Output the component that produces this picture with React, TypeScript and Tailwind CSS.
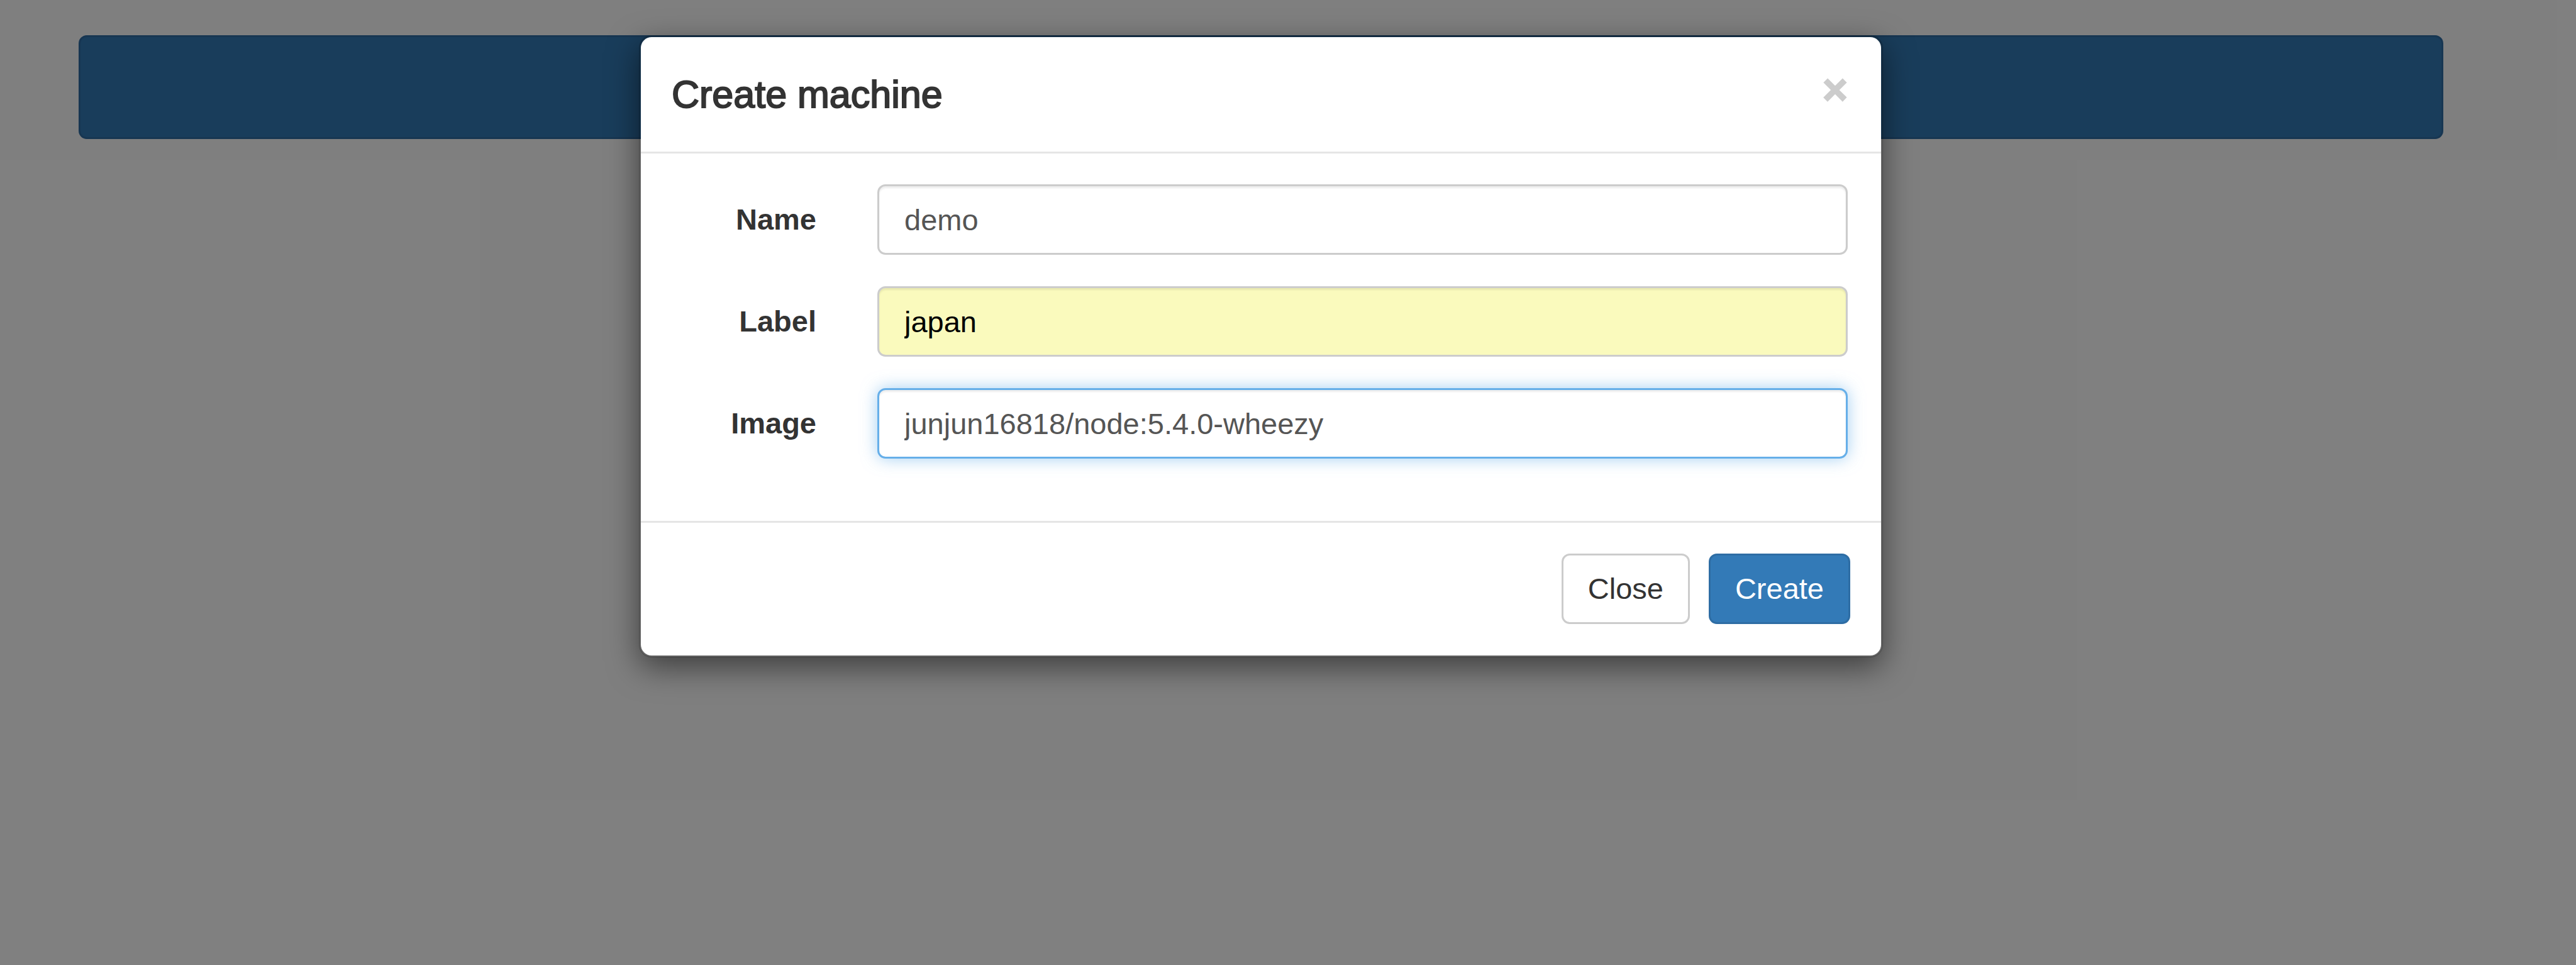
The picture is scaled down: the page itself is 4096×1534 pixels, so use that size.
import { useState } from "react";

const fieldBase =
  "h-[112px] w-full min-w-0 flex-1 rounded-[13px] border-[3px] px-[40px] text-[47px] outline-none";

const fields = [
  {
    id: "name",
    label: "Name",
    value: "demo",
    style:
      "border-[#cccccc] bg-white text-[#555555] shadow-[inset_0_3px_3px_rgba(0,0,0,0.075)]",
  },
  {
    id: "label",
    label: "Label",
    value: "japan",
    style:
      "border-[#cccccc] bg-[#fafabd] text-black shadow-[inset_0_3px_3px_rgba(0,0,0,0.075)]",
  },
  {
    id: "image",
    label: "Image",
    value: "junjun16818/node:5.4.0-wheezy",
    style:
      "border-[#66afe9] bg-white text-[#555555] shadow-[inset_0_3px_3px_rgba(0,0,0,0.075),0_0_26px_rgba(102,175,233,0.6)]",
  },
];

function Field({ id, label, value, style }: (typeof fields)[number]) {
  const [text, setText] = useState(value);
  return (
    <div className="flex items-center gap-[97px]">
      <label htmlFor={id} className="w-[230px] shrink-0 text-right font-bold">
        {label}
      </label>
      <input
        id={id}
        type="text"
        value={text}
        onChange={(e) => setText(e.target.value)}
        className={`${fieldBase} ${style}`}
      />
    </div>
  );
}

function CreateMachineDialog() {
  return (
    <form
      role="dialog"
      aria-modal="true"
      aria-labelledby="dialog-title"
      onSubmit={(e) => e.preventDefault()}
      className="w-full max-w-[1978px] rounded-[20px] border-[3px] border-black/20 bg-white bg-clip-padding shadow-[0_16px_49px_rgba(0,0,0,0.5)]"
    >
      <header className="flex items-start justify-between border-b-[3px] border-[#e5e5e5] py-[49px] pr-[53px] pl-[49px]">
        <h4
          id="dialog-title"
          className="text-[61px] leading-[84px] [-webkit-text-stroke:2px_#333333]"
        >
          Create machine
        </h4>
        <button
          type="button"
          aria-label="Dismiss"
          className="text-[69px] leading-[69px] font-bold text-[#cccccc] [-webkit-text-stroke:2px_#cccccc]"
        >
          ×
        </button>
      </header>

      <div className="flex flex-col gap-[50px] pt-[49px] pr-[53px] pb-[99px] pl-[49px]">
        {fields.map((f) => (
          <Field key={f.id} {...f} />
        ))}
      </div>

      <footer className="flex justify-end gap-[30px] border-t-[3px] border-[#e5e5e5] px-[49px] pt-[49px] pb-[50px]">
        <button
          type="button"
          className="h-[112px] rounded-[13px] border-[3px] border-[#cccccc] bg-white px-[39px]"
        >
          Close
        </button>
        <button
          type="submit"
          className="h-[112px] rounded-[13px] border-[3px] border-[#2e6da4] bg-[#337ab7] px-[39px] text-white"
        >
          Create
        </button>
      </footer>
    </form>
  );
}

export default function App() {
  return (
    <div className="relative min-h-screen bg-white font-['Liberation_Sans',Arial,sans-serif] text-[47px] text-[#333333] antialiased">
      <main className="pt-[56px] pr-[211px] pl-[125px]">
        <div className="h-[165px] rounded-[13px] border-[3px] border-[#2e6da4] bg-[#337ab7]" />
      </main>
      <div className="absolute inset-0 flex items-start justify-center bg-black/50 pt-[56px] pr-[86px]">
        <CreateMachineDialog />
      </div>
    </div>
  );
}
